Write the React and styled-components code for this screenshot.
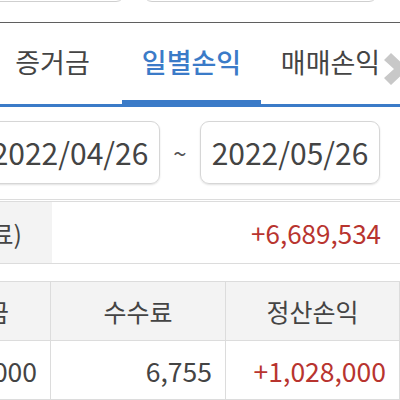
import React from 'react';
import styled, { createGlobalStyle } from 'styled-components';

const GlobalStyle = createGlobalStyle`
  html, body {
    margin: 0;
    padding: 0;
    background: #fff;
  }
  body {
    width: 400px;
    height: 400px;
    overflow: hidden;
    font-family: "Noto Sans CJK KR", "Noto Sans", sans-serif;
    color: #444;
  }
`;

const tabs = [
  { label: '증거금' },
  { label: '일별손익', active: true },
  { label: '매매손익' },
];

const App = () => {
  return (
    <Screen>
      <GlobalStyle />
      <TopRow>
        <TopButton $width={145} $offset={-20} />
        <TopButton $width={235} />
      </TopRow>
      <TabBar>
        {tabs.map((t) => (
          <Tab key={t.label} $active={t.active}>{t.label}</Tab>
        ))}
        <Chevron viewBox="0 0 30 34">
          <path d="M7 1 L24 17 L7 33 L0 26 L10 17 L0 8 Z" fill="#c8c8c8" />
        </Chevron>
      </TabBar>
      <DateRow>
        <DateBox>2022/04/26</DateBox>
        <Tilde>~</Tilde>
        <DateBox>2022/05/26</DateBox>
      </DateRow>
      <Summary>
        <SummaryLabel>(수수료)</SummaryLabel>
        <SummaryValue>+6,689,534</SummaryValue>
      </Summary>
      <Table>
        <HeadCell $first>입출금</HeadCell>
        <HeadCell>수수료</HeadCell>
        <HeadCell>정산손익</HeadCell>
        <Cell>1,000,000</Cell>
        <Cell>6,755</Cell>
        <Cell $red>+1,028,000</Cell>
      </Table>
    </Screen>
  );
};

export default App;

const Screen = styled.div`
  width: 400px;
  height: 400px;
  overflow: hidden;
  display: flex;
  flex-direction: column;
`;

const TopRow = styled.div`
  display: flex;
  gap: 18px;
  height: 22px;
  border-bottom: 1px solid #5f5f5f;
  overflow: hidden;
`;

const TopButton = styled.div`
  flex: 0 0 auto;
  width: ${(p) => p.$width}px;
  height: 42px;
  margin-top: -40px;
  margin-left: ${(p) => p.$offset || 0}px;
  border: 1px solid #cfcfcf;
  border-radius: 9px;
  box-sizing: border-box;
`;

const TabBar = styled.div`
  position: relative;
  display: flex;
  height: 84px;
  margin-left: -17px;
  margin-right: -17px;
  border-bottom: 3px solid #3b7bc8;
  box-sizing: border-box;
`;

const Tab = styled.div`
  flex: 0 0 139px;
  display: flex;
  align-items: center;
  justify-content: center;
  font-size: 27px;
  padding-top: 2px;
  padding-bottom: 6px;
  box-sizing: border-box;
  color: ${(p) => (p.$active ? '#3b7bc8' : '#444')};
  font-weight: ${(p) => (p.$active ? 500 : 400)};
  box-shadow: ${(p) => (p.$active ? 'inset 0 -4px 0 #3b7bc8' : 'none')};
`;

const Chevron = styled.svg`
  position: absolute;
  right: 3px;
  top: 29px;
  width: 30px;
  height: 34px;
`;

const DateRow = styled.div`
  display: flex;
  align-items: center;
  height: 93px;
  margin-left: -20px;
  border-bottom: 1px solid #dcdcdc;
  box-sizing: border-box;
  padding-bottom: 2px;
`;

const DateBox = styled.div`
  flex: 0 0 180px;
  height: 63px;
  box-sizing: border-box;
  border: 1px solid #d6d6d6;
  border-radius: 9px;
  box-shadow: 0 1px 2px rgba(0, 0, 0, 0.12);
  display: flex;
  align-items: center;
  justify-content: center;
  font-size: 30px;
  color: #444;
`;

const Tilde = styled.div`
  flex: 0 0 40px;
  text-align: center;
  font-size: 24px;
  color: #555;
`;

const Summary = styled.div`
  display: flex;
  height: 63px;
  margin-top: 1px;
  border-top: 1px solid #dcdcdc;
  border-bottom: 1px solid #dcdcdc;
  box-sizing: border-box;
`;

const SummaryLabel = styled.div`
  flex: 0 0 152px;
  margin-left: -100px;
  background: #f3f3f3;
  display: flex;
  align-items: center;
  justify-content: flex-end;
  padding-right: 30px;
  box-sizing: border-box;
  font-size: 25px;
  color: #444;
  white-space: nowrap;
`;

const SummaryValue = styled.div`
  flex: 1;
  display: flex;
  align-items: center;
  justify-content: flex-end;
  padding-right: 19px;
  font-size: 26px;
  color: #b8342f;
`;

const Table = styled.div`
  display: grid;
  grid-template-columns: 151px 175px 174px;
  grid-template-rows: 59px 59px;
  margin-top: 17px;
  margin-left: -100px;
  border-top: 1px solid #dcdcdc;
`;

const HeadCell = styled.div`
  background: #f3f3f3;
  display: flex;
  align-items: center;
  justify-content: ${(p) => (p.$first ? 'flex-end' : 'center')};
  padding-right: ${(p) => (p.$first ? '41px' : '0')};
  font-size: 25px;
  color: #444;
  border-right: 1px solid #dcdcdc;
  border-bottom: 1px solid #dcdcdc;
`;

const Cell = styled.div`
  display: flex;
  align-items: center;
  justify-content: flex-end;
  padding-right: 13px;
  font-size: 26.5px;
  color: ${(p) => (p.$red ? '#b8342f' : '#444')};
  border-right: 1px solid #dcdcdc;
  border-bottom: 1px solid #dcdcdc;
`;
